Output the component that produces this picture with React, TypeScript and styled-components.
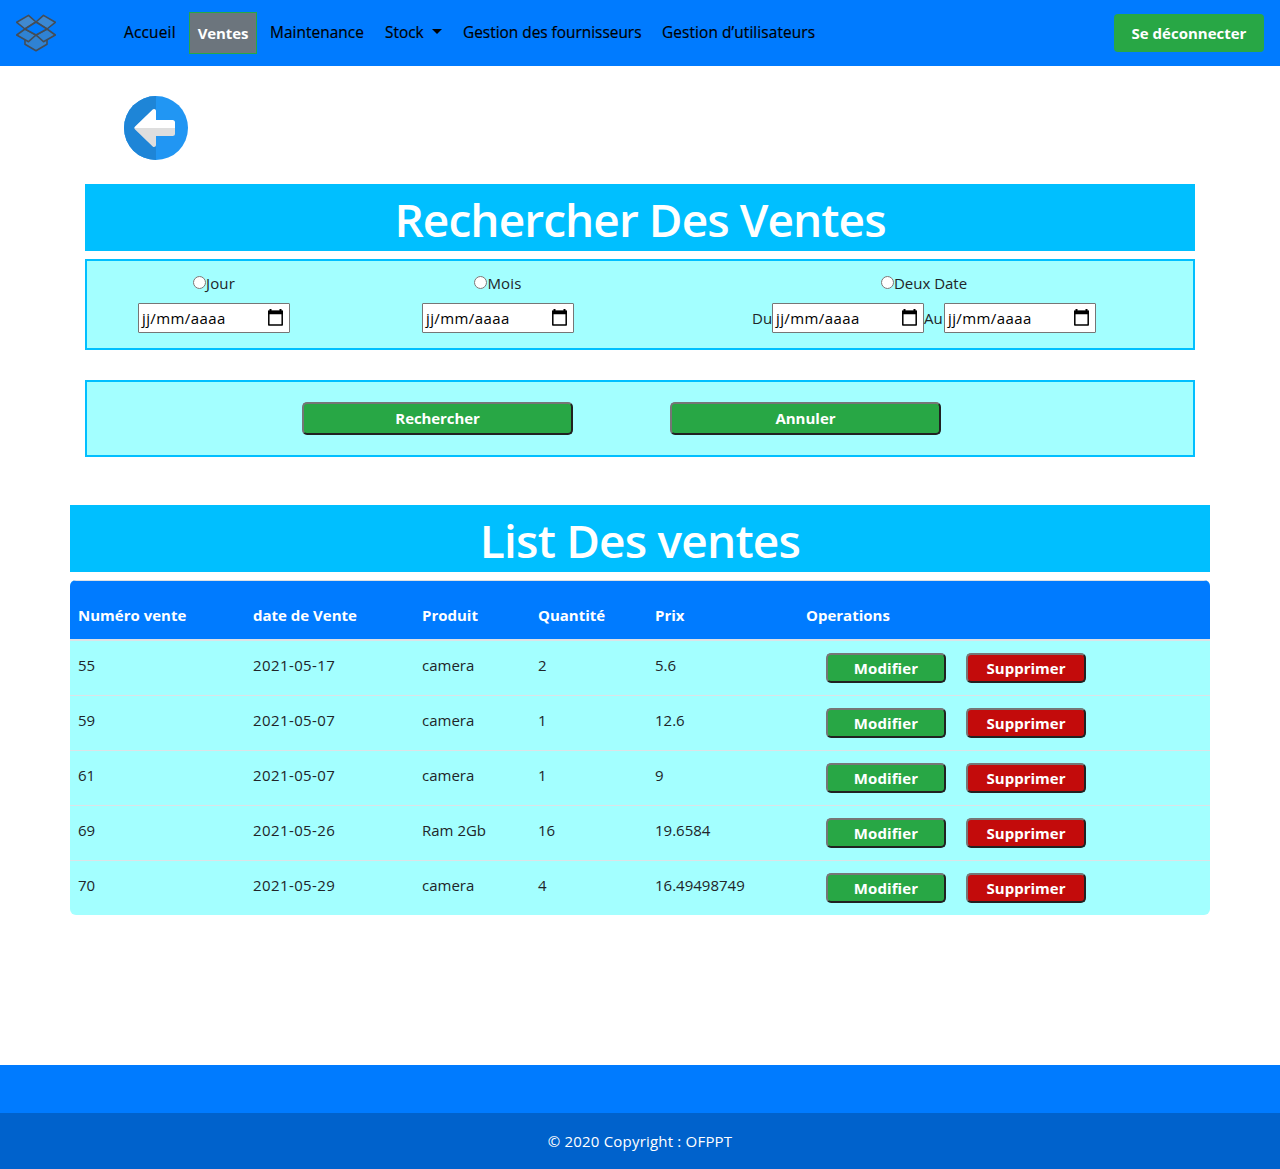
import React from "react";
import styled, { createGlobalStyle } from "styled-components";

const GlobalStyle = createGlobalStyle`
  *, *::before, *::after { box-sizing: border-box; }
  body {
    margin: 0;
    background: #fff;
    color: #212529;
    font-family: "Segoe UI", "Open Sans", "Noto Sans", sans-serif;
    font-size: 15px;
    line-height: 24px;
  }
`;

const Page = styled.div`
  display: flex;
  flex-direction: column;
  height: 1169px;
`;

const Label = styled.span<{ $track?: number }>`
  letter-spacing: ${(p) => p.$track ?? 0}px;
  white-space: nowrap;
`;

/* Navigation */
const Navbar = styled.header`
  display: flex;
  align-items: center;
  height: 66px;
  padding: 0 16px;
  background: #007bff;
`;
const Logo = styled.svg`
  width: 40px;
  height: 40px;
  margin-right: 60px;
`;
const NavList = styled.nav`
  display: flex;
  align-items: center;
  flex: 1;
`;
const NavItem = styled.a<{ $width: number }>`
  display: flex;
  align-items: center;
  width: ${(p) => p.$width}px;
  padding-left: 8px;
  color: #000;
  font-size: 15.4px;
  font-weight: 500;
  -webkit-text-stroke: 0.2px #000;
`;
const ActiveItem = styled.a`
  display: flex;
  align-items: center;
  justify-content: center;
  width: 68px;
  height: 42px;
  margin: 0 5px;
  border: 1px solid #28a745;
  background: #6c757d;
  color: #fff;
  font-weight: 700;
`;
const Caret = styled.i`
  margin-left: 8px;
  margin-top: -3px;
  border-top: 5px solid #000;
  border-left: 5px solid transparent;
  border-right: 5px solid transparent;
`;
const Logout = styled.button`
  width: 150px;
  height: 38px;
  padding: 0 0 1px;
  border: 0;
  border-radius: 4px;
  background: #28a745;
  color: #fff;
  font: inherit;
  font-weight: 700;
`;

/* Search */
const Search = styled.main`
  width: 1110px;
  margin: 30px auto 0;
`;
const BackLink = styled.a`
  display: block;
  height: 64px;
  margin: 0 0 24px 39px;
`;
const Title = styled.h1<{ $track?: number }>`
  height: 67px;
  margin: 0 0 8px;
  background: #00bfff;
  color: #fff;
  font-size: 46px;
  font-weight: 600;
  line-height: 70px;
  text-align: center;
  letter-spacing: ${(p) => p.$track ?? 0}px;
`;
const Panel = styled.section<{ $height: number }>`
  display: flex;
  height: ${(p) => p.$height}px;
  border: 2px solid #00bfff;
  background: #a3ffff;
`;
const Field = styled.div<{ $width: number; $left: number }>`
  display: flex;
  flex-direction: column;
  align-items: center;
  width: ${(p) => p.$width}px;
  margin-left: ${(p) => p.$left}px;
  padding-top: 10px;
`;
const RadioLabel = styled.label`
  display: flex;
  align-items: center;
  height: 24px;
`;
const Radio = styled.input`
  width: 13px;
  height: 13px;
  margin: 0 0 2px;
`;
const DateRow = styled.div`
  display: flex;
  align-items: center;
  margin-top: 8px;
`;
const DateBox = styled.div`
  display: flex;
  align-items: center;
  justify-content: space-between;
  width: 152px;
  height: 30px;
  padding: 0 6px 0 3px;
  border: 1px solid #767676;
  border-radius: 1px;
  background: #fff;
  color: #000;
`;
const CalendarIcon = styled.svg`
  width: 15px;
  height: 17px;
  margin-bottom: 1px;
`;
const Prefix = styled.span`
  width: 20px;
`;

/* Buttons */
const Button = styled.button<{ $width: number; $height: number; $danger?: boolean }>`
  display: flex;
  justify-content: center;
  align-items: center;
  width: ${(p) => p.$width}px;
  height: ${(p) => p.$height}px;
  padding: 0 0 1px;
  border: 2px solid;
  border-color: #767676 #212121 #212121 #767676;
  border-radius: 5px;
  background: ${(p) => (p.$danger ? "#c30b0b" : "#28a745")};
  color: #fff;
  font: inherit;
  font-weight: 700;
  line-height: 24px;
`;
const SearchButton = styled(Button)`
  padding-bottom: 2px;
`;
const Actions = styled(Panel)`
  gap: 97px;
  margin-top: 30px;
  padding: 20px 0 0 215px;
`;

/* Listing */
const Listing = styled.section`
  width: 1140px;
  margin: 48px auto 0;
`;
const Table = styled.div`
  border-radius: 6px;
  overflow: hidden;
  background: #a3ffff;
`;
const Row = styled.div`
  display: grid;
  grid-template-columns: 175px 169px 116px 117px 151px 412px;
  height: 55px;
  padding-top: 12px;
  border-top: 1px solid #dee2e6;
  & > * { padding-left: 8px; }
  &:nth-child(2) { height: 54px; border-top: 0; }
`;
const HeadRow = styled(Row)`
  height: 61px;
  padding-top: 22px;
  border-bottom: 2px solid #dee2e6;
  background: #007bff;
  color: #fff;
  font-weight: 700;
`;
const Operations = styled.div`
  display: flex;
  gap: 20px;
  && { padding-left: 28px; }
`;

/* Footer */
const Footer = styled.footer`
  height: 104px;
  margin-top: auto;
  padding-top: 48px;
  background: #007bff;
`;
const Copyright = styled.div`
  height: 56px;
  background: #0062cc;
  color: #fff;
  letter-spacing: 0.2px;
  line-height: 56px;
  text-align: center;
`;

const DropboxLogo = () => (
  <Logo viewBox="0 0 40 40" fill="#2f82d3" stroke="#434d58" strokeWidth="1.6" strokeLinejoin="round">
    <path d="M9 27.200v4.100l11 6.400 11-6.400v-4.100L20 22z" />
    <path d="M.7 9.300 12.500 2.400 20 9 9 16z" fill="#4089d0" />
    <path d="M39.300 9.300 27.500 2.400 20 9l11 7z" fill="#3a88d4" />
    <path d="M9 16 .7 22 12.500 28.700 20 22z" />
    <path d="m31 16 8.300 6-11.800 6.700L20 22z" />
    <path d="M9 16 20 9l11 7-11 6z" fill="#007bff" />
  </Logo>
);

const BackIcon = () => (
  <svg width="64" height="64" viewBox="0 0 64 64">
    <circle cx="32" cy="32" r="32" fill="#2196f3" />
    <path d="M32 0a32 32 0 0 0 0 64z" fill="#1e85d7" />
    <path d="M10.300 32c0-.6.3-1.100.8-1.600L28.700 13.600c1.200-1.100 3.300-.4 3.300 1.400v9h16.500a2.500 2.500 0 0 1 2.500 2.500V32z" fill="#fff" />
    <path d="M10.300 32c0 .6.3 1.100.8 1.600l17.600 16.800c1.200 1.100 3.300.4 3.300-1.400v-9h16.500a2.500 2.500 0 0 0 2.500-2.500V32z" fill="#dedede" />
  </svg>
);

const DateInput = () => (
  <DateBox>
    <Label $track={0.4}>jj/mm/aaaa</Label>
    <CalendarIcon viewBox="0 0 15 17">
      <path d="M.8 2.500h13.400v13.600H.8z" fill="none" stroke="#000" strokeWidth="1.5" strokeLinejoin="round" />
      <path d="M0 1.500h15V5.300H0zM1.500 0h2v2h-2zM11.500 0h2v2h-2z" />
    </CalendarIcon>
  </DateBox>
);

const SALES = [
  ["55", "2021-05-17", "camera", "2", "5.6"],
  ["59", "2021-05-07", "camera", "1", "12.6"],
  ["61", "2021-05-07", "camera", "1", "9"],
  ["69", "2021-05-26", "Ram 2Gb", "16", "19.6584"],
  ["70", "2021-05-29", "camera", "4", "16.49498749"],
];
const COLUMNS = ["Numéro vente", "date de Vente", "Produit", "Quantité", "Prix", "Operations"];

export default function App() {
  return (
    <Page>
      <GlobalStyle />
      <Navbar>
        <DropboxLogo />
        <NavList>
          <NavItem $width={68}><Label $track={0.2}>Accueil</Label></NavItem>
          <ActiveItem><Label $track={-0.1}>Ventes</Label></ActiveItem>
          <NavItem $width={115}><Label $track={0.05}>Maintenance</Label></NavItem>
          <NavItem $width={78}><Label>Stock</Label><Caret /></NavItem>
          <NavItem $width={199}><Label>Gestion des fournisseurs</Label></NavItem>
          <NavItem $width={170}><Label $track={0.1}>Gestion d’utilisateurs</Label></NavItem>
        </NavList>
        <Logout><Label>Se déconnecter</Label></Logout>
      </Navbar>

      <Search>
        <BackLink><BackIcon /></BackLink>
        <Title $track={-0.93}>Rechercher Des Ventes</Title>
        <Panel $height={91}>
          <Field $width={152} $left={51}>
            <RadioLabel><Radio type="radio" name="mode" /><Label $track={0.2}>Jour</Label></RadioLabel>
            <DateRow><DateInput /></DateRow>
          </Field>
          <Field $width={152} $left={132}>
            <RadioLabel><Radio type="radio" name="mode" /><Label $track={0.2}>Mois</Label></RadioLabel>
            <DateRow><DateInput /></DateRow>
          </Field>
          <Field $width={344} $left={178}>
            <RadioLabel><Radio type="radio" name="mode" /><Label>Deux Date</Label></RadioLabel>
            <DateRow>
              <Prefix>Du</Prefix><DateInput /><Prefix>Au</Prefix><DateInput />
            </DateRow>
          </Field>
        </Panel>
        <Actions $height={77}>
          <SearchButton $width={271} $height={33}><Label $track={-0.1}>Rechercher</Label></SearchButton>
          <SearchButton $width={271} $height={33}><Label>Annuler</Label></SearchButton>
        </Actions>
      </Search>

      <Listing>
        <Title $track={-0.8}>List Des ventes</Title>
        <Table>
          <HeadRow>
            {COLUMNS.map((c) => <Label key={c}>{c}</Label>)}
          </HeadRow>
          {SALES.map((sale) => (
            <Row key={sale[0]}>
              {sale.map((v, i) => <Label key={i} $track={i === 1 ? 0.4 : 0}>{v}</Label>)}
              <Operations>
                <Button $width={120} $height={30}><Label $track={0.1}>Modifier</Label></Button>
                <Button $width={120} $height={30} $danger><Label>Supprimer</Label></Button>
              </Operations>
            </Row>
          ))}
        </Table>
      </Listing>

      <Footer>
        <Copyright>© 2020 Copyright : OFPPT</Copyright>
      </Footer>
    </Page>
  );
}
